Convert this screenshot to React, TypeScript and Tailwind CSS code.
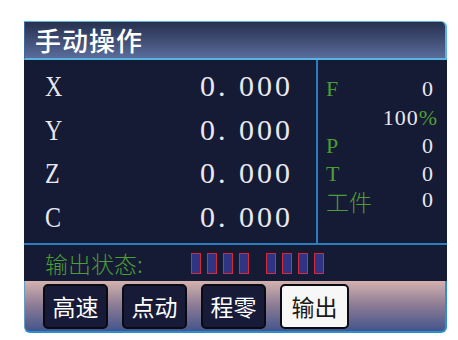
const serif = "font-['Liberation_Serif','Noto_Sans_CJK_SC',serif]";
const cjk = "font-['Noto_Sans_CJK_SC',sans-serif]";

const axes = ["X", "Y", "Z", "C"];

function StatusBoxes() {
  return (
    <div className="flex items-center gap-[17px]">
      {[0, 1].map((g) => (
        <div key={g} className="flex gap-[6px]">
          {[0, 1, 2, 3].map((i) => (
            <div
              key={i}
              className="w-[10px] h-[21px] bg-[#2f3584] border border-[#d42a3a]"
            />
          ))}
        </div>
      ))}
    </div>
  );
}

function SoftKey({ label, active }: { label: string; active?: boolean }) {
  return (
    <div
      className={
        "h-[45px] flex items-center justify-center whitespace-nowrap rounded-[5px] border-2 border-[#0a0a12] text-[23px] " +
        cjk +
        (active
          ? " bg-[#f7f7f7] text-[#1a1a1a] w-[69px]"
          : " bg-[#171b38] text-white w-[65px]")
      }
    >
      {label}
    </div>
  );
}

export default function App() {
  return (
    <div className="w-[458px] h-[340px] bg-white pt-[21px] pl-[24px]">
      <div className="w-[423px] flex flex-col">
        {/* title */}
        <div className="h-[39px] flex items-center pl-[10px] bg-gradient-to-b from-[#27304f] to-[#5a6d9c] border-t border-r-2 border-b-2 border-[#5ab4e0] border-l border-l-[#3a6a9a] rounded-tr-[6px]">
          <span className={"text-white text-[26px] font-medium leading-none tracking-[1px] " + cjk}>
            手动操作
          </span>
        </div>

        {/* data area */}
        <div className="h-[183px] flex bg-[#151a35]">
          <div className="w-[294px] border-r-2 border-[#2a7ec0] flex flex-col pt-[4px] pl-[21px] pr-[23px]">
            {axes.map((a) => (
              <div
                key={a}
                className={"h-[43.5px] flex items-center justify-between text-[#e8e8ee] text-[30px] " + serif}
              >
                <span className="inline-block scale-x-[0.8] origin-left">{a}</span>
                <span className="tracking-[3px]">0. 000</span>
              </div>
            ))}
          </div>
          <div className={"flex-1 flex flex-col pt-[14px] pl-[8px] pr-[14px] text-[22px] " + serif}>
            <div className="h-[28px] flex items-center justify-between">
              <span className="text-[#4e9c36]">F</span>
              <span className="text-[#e8e8ee]">0</span>
            </div>
            <div className="h-[30px] flex items-center justify-end mr-[-5px] tracking-[1px]">
              <span className="text-[#e8e8ee]">100</span>
              <span className="text-[#4e9c36]">%</span>
            </div>
            <div className="h-[27px] flex items-center justify-between">
              <span className="text-[#4e9c36]">P</span>
              <span className="text-[#e8e8ee]">0</span>
            </div>
            <div className="h-[28px] flex items-center justify-between">
              <span className="text-[#4e9c36]">T</span>
              <span className="text-[#e8e8ee]">0</span>
            </div>
            <div className="h-[25px] flex items-center justify-between">
              <span className={"text-[#4e9c36] text-[23px] font-light translate-y-[2px] " + cjk}>工件</span>
              <span className="text-[#e8e8ee]">0</span>
            </div>
          </div>
        </div>

        {/* output status */}
        <div className="h-[38px] flex items-center bg-[#151a35] border-t-2 border-[#2a7ec0] pl-[21px]">
          <span className={"text-[#4e9c36] text-[23px] font-light w-[146px] " + cjk}>
            输出状态:
          </span>
          <StatusBoxes />
        </div>

        {/* soft keys */}
        <div className="h-[52px] flex items-start gap-[14px] pt-[3px] pl-[18px] bg-gradient-to-b from-[#d4b2ae] via-[#8a7a94] to-[#44548a] border-b-2 border-r-2 border-[#2a8fd0] border-l border-l-[#6a9ac0] rounded-b-[6px]">
          <SoftKey label="高速" />
          <SoftKey label="点动" />
          <SoftKey label="程零" />
          <SoftKey label="输出" active />
        </div>
      </div>
    </div>
  );
}
